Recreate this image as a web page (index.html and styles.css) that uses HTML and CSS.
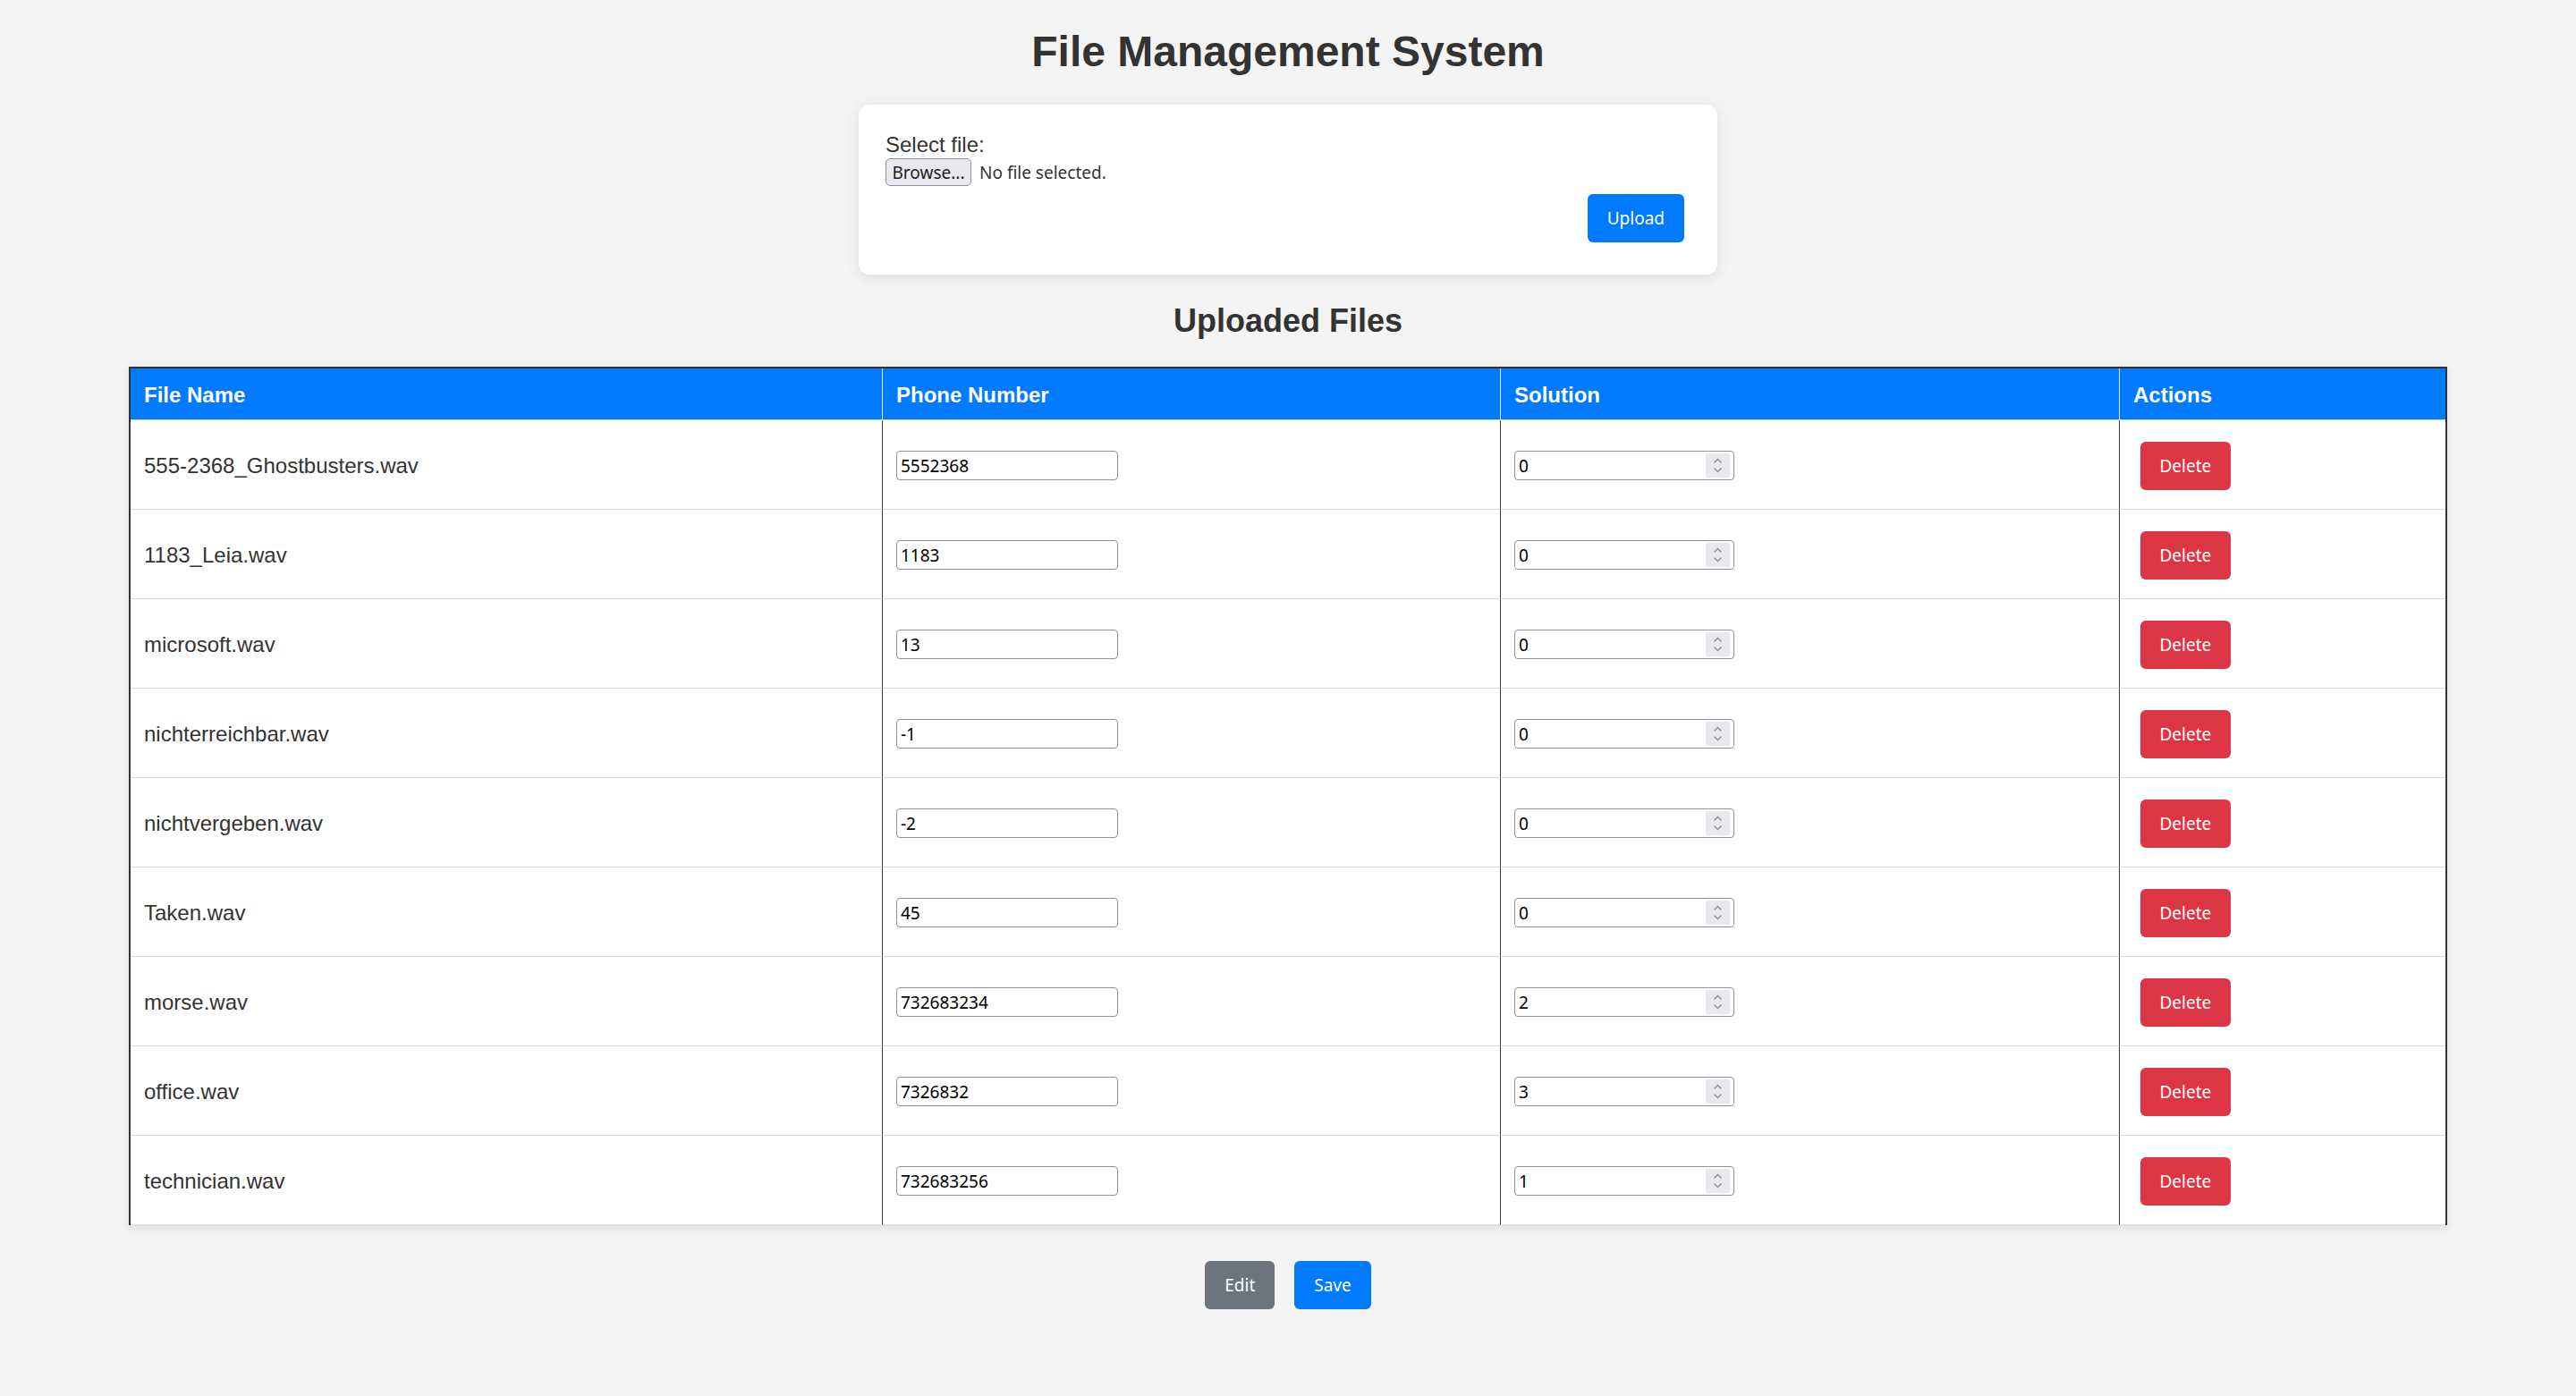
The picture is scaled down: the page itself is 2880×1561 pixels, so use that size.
FILE: index.html
```html
<!DOCTYPE html>
<html lang="en">
<head>
<meta charset="utf-8">
<title>File Management System</title>
<link rel="stylesheet" href="styles.css">
</head>
<body>
<h1 class="title">File Management System</h1>

<form class="upload-card">
  <label class="file-label">Select file:</label>
  <div class="file-row">
    <span class="browse-btn">Browse...</span>
    <span class="file-status">No file selected.</span>
  </div>
  <div class="upload-row">
    <button type="button" class="btn btn-primary btn-upload">Upload</button>
  </div>
</form>

<h2 class="subtitle">Uploaded Files</h2>

<table class="files">
  <colgroup>
    <col class="c-name">
    <col class="c-phone">
    <col class="c-sol">
    <col class="c-act">
  </colgroup>
  <thead>
    <tr><th>File Name</th><th>Phone Number</th><th>Solution</th><th>Actions</th></tr>
  </thead>
  <tbody>
    <tr><td>555-2368_Ghostbusters.wav</td><td><input class="text-in" type="text" value="5552368"></td><td><div class="num-in"><input type="text" value="0"><span class="spin"><svg width="27" height="27" viewBox="0 0 27 27"><path d="M9.5 10.5 L13.5 6.5 L17.5 10.5" /><path d="M9.5 16.5 L13.5 20.5 L17.5 16.5" /></svg></span></div></td><td><button type="button" class="btn btn-danger">Delete</button></td></tr>
    <tr><td>1183_Leia.wav</td><td><input class="text-in" type="text" value="1183"></td><td><div class="num-in"><input type="text" value="0"><span class="spin"><svg width="27" height="27" viewBox="0 0 27 27"><path d="M9.5 10.5 L13.5 6.5 L17.5 10.5" /><path d="M9.5 16.5 L13.5 20.5 L17.5 16.5" /></svg></span></div></td><td><button type="button" class="btn btn-danger">Delete</button></td></tr>
    <tr><td>microsoft.wav</td><td><input class="text-in" type="text" value="13"></td><td><div class="num-in"><input type="text" value="0"><span class="spin"><svg width="27" height="27" viewBox="0 0 27 27"><path d="M9.5 10.5 L13.5 6.5 L17.5 10.5" /><path d="M9.5 16.5 L13.5 20.5 L17.5 16.5" /></svg></span></div></td><td><button type="button" class="btn btn-danger">Delete</button></td></tr>
    <tr><td>nichterreichbar.wav</td><td><input class="text-in" type="text" value="-1"></td><td><div class="num-in"><input type="text" value="0"><span class="spin"><svg width="27" height="27" viewBox="0 0 27 27"><path d="M9.5 10.5 L13.5 6.5 L17.5 10.5" /><path d="M9.5 16.5 L13.5 20.5 L17.5 16.5" /></svg></span></div></td><td><button type="button" class="btn btn-danger">Delete</button></td></tr>
    <tr><td>nichtvergeben.wav</td><td><input class="text-in" type="text" value="-2"></td><td><div class="num-in"><input type="text" value="0"><span class="spin"><svg width="27" height="27" viewBox="0 0 27 27"><path d="M9.5 10.5 L13.5 6.5 L17.5 10.5" /><path d="M9.5 16.5 L13.5 20.5 L17.5 16.5" /></svg></span></div></td><td><button type="button" class="btn btn-danger">Delete</button></td></tr>
    <tr><td>Taken.wav</td><td><input class="text-in" type="text" value="45"></td><td><div class="num-in"><input type="text" value="0"><span class="spin"><svg width="27" height="27" viewBox="0 0 27 27"><path d="M9.5 10.5 L13.5 6.5 L17.5 10.5" /><path d="M9.5 16.5 L13.5 20.5 L17.5 16.5" /></svg></span></div></td><td><button type="button" class="btn btn-danger">Delete</button></td></tr>
    <tr><td>morse.wav</td><td><input class="text-in" type="text" value="732683234"></td><td><div class="num-in"><input type="text" value="2"><span class="spin"><svg width="27" height="27" viewBox="0 0 27 27"><path d="M9.5 10.5 L13.5 6.5 L17.5 10.5" /><path d="M9.5 16.5 L13.5 20.5 L17.5 16.5" /></svg></span></div></td><td><button type="button" class="btn btn-danger">Delete</button></td></tr>
    <tr><td>office.wav</td><td><input class="text-in" type="text" value="7326832"></td><td><div class="num-in"><input type="text" value="3"><span class="spin"><svg width="27" height="27" viewBox="0 0 27 27"><path d="M9.5 10.5 L13.5 6.5 L17.5 10.5" /><path d="M9.5 16.5 L13.5 20.5 L17.5 16.5" /></svg></span></div></td><td><button type="button" class="btn btn-danger">Delete</button></td></tr>
    <tr><td>technician.wav</td><td><input class="text-in" type="text" value="732683256"></td><td><div class="num-in"><input type="text" value="1"><span class="spin"><svg width="27" height="27" viewBox="0 0 27 27"><path d="M9.5 10.5 L13.5 6.5 L17.5 10.5" /><path d="M9.5 16.5 L13.5 20.5 L17.5 16.5" /></svg></span></div></td><td><button type="button" class="btn btn-danger">Delete</button></td></tr>
  </tbody>
</table>

<div class="actions">
  <button type="button" class="btn btn-secondary">Edit</button>
  <button type="button" class="btn btn-primary">Save</button>
</div>
</body>
</html>
```

FILE: styles.css
```css
html, body {
  margin: 0;
  padding: 0;
  background: #f4f4f4;
}

body {
  font-family: "Liberation Sans", Arial, sans-serif;
  font-size: 24px;
  color: #333;
  padding-top: 30px;
  min-height: 1561px;
  box-sizing: border-box;
}

.title {
  margin: 0 0 32px;
  font-size: 48px;
  font-weight: bold;
  text-align: center;
  color: #333;
  line-height: 55px;
}

.upload-card {
  width: 960px;
  box-sizing: border-box;
  margin: 0 auto;
  background: #fff;
  border-radius: 12px;
  padding: 31px 30px 29px;
  box-shadow: 0 3px 15px rgba(0, 0, 0, 0.1);
}

.file-label {
  display: block;
  line-height: 28px;
  font-size: 24px;
  color: #333;
}

.file-row {
  display: flex;
  align-items: center;
  height: 33px;
  font-family: "Noto Sans", "Liberation Sans", sans-serif;
  font-size: 19px;
}

.browse-btn {
  box-sizing: border-box;
  width: 96px;
  height: 31px;
  display: flex;
  align-items: center;
  justify-content: center;
  background: #e9e9ed;
  border: 1px solid #8f8f9d;
  border-radius: 5px;
  color: #1b1b1b;
}

.file-status {
  margin-left: 9px;
  color: #333;
}

.upload-row {
  display: flex;
  justify-content: flex-end;
}

.btn {
  font-family: "Noto Sans", "Liberation Sans", sans-serif;
  font-size: 19px;
  color: #fff;
  border: none;
  border-radius: 6px;
  height: 54px;
  padding: 0 22px;
  margin: 0;
  cursor: pointer;
}

.btn-upload {
  margin: 7.5px;
  margin-right: 7px;
}

.btn-primary { background: #007bff; }
.btn-danger { background: #dc3545; margin: 7.5px; }
.btn-secondary { background: #6c757d; }

.subtitle {
  margin: 31px 0 30px;
  font-size: 36px;
  line-height: 42px;
  text-align: center;
  color: #333;
}

.files {
  width: 2592px;
  margin: 0 auto;
  table-layout: fixed;
  border-collapse: separate;
  border-spacing: 0;
  border-top: 2px solid #333;
  border-left: 2px solid #333;
  border-right: 2px solid #333;
  background: #fff;
  box-shadow: 0 3px 10px rgba(0, 0, 0, 0.1);
}

.c-name { width: 841px; }
.c-phone { width: 691px; }
.c-sol { width: 692px; }
.c-act { width: 364px; }

.files th {
  background: #007bff;
  color: #fff;
  font-weight: bold;
  text-align: left;
  font-size: 24px;
  line-height: 27px;
  padding: 16px 15px 14px;
  border-right: 1px solid #e6e6e6;
  border-bottom: 1px solid #ddd;
}

.files td {
  padding: 16px 15px 14px;
  font-size: 24px;
  color: #333;
  vertical-align: middle;
  border-right: 1px solid #3a3a3a;
  border-bottom: 1px solid #ddd;
  height: 69px;
  box-sizing: content-box;
}

.files th:last-child,
.files td:last-child {
  border-right: none;
}

.text-in {
  box-sizing: border-box;
  width: 248px;
  height: 33px;
  border: 1px solid #8f8f9d;
  border-radius: 4px;
  padding: 0 4px;
  font-family: "Noto Sans", "Liberation Sans", sans-serif;
  font-size: 19px;
  color: #000;
  background: #fff;
  display: block;
}

.num-in {
  box-sizing: border-box;
  width: 246px;
  height: 33px;
  border: 1px solid #8f8f9d;
  border-radius: 4px;
  display: flex;
  align-items: center;
  background: #fff;
}

.num-in input {
  flex: 1;
  min-width: 0;
  border: none;
  outline: none;
  background: transparent;
  padding: 0 0 0 4px;
  font-family: "Noto Sans", "Liberation Sans", sans-serif;
  font-size: 19px;
  color: #000;
}

.spin {
  width: 27px;
  height: 27px;
  margin-right: 4px;
  background: #e9e9ed;
  display: block;
}

.spin svg {
  display: block;
}

.spin path {
  fill: none;
  stroke: #8f8f9d;
  stroke-width: 1.5;
}

.actions {
  display: flex;
  justify-content: center;
  gap: 22px;
  margin-top: 40px;
}
```
